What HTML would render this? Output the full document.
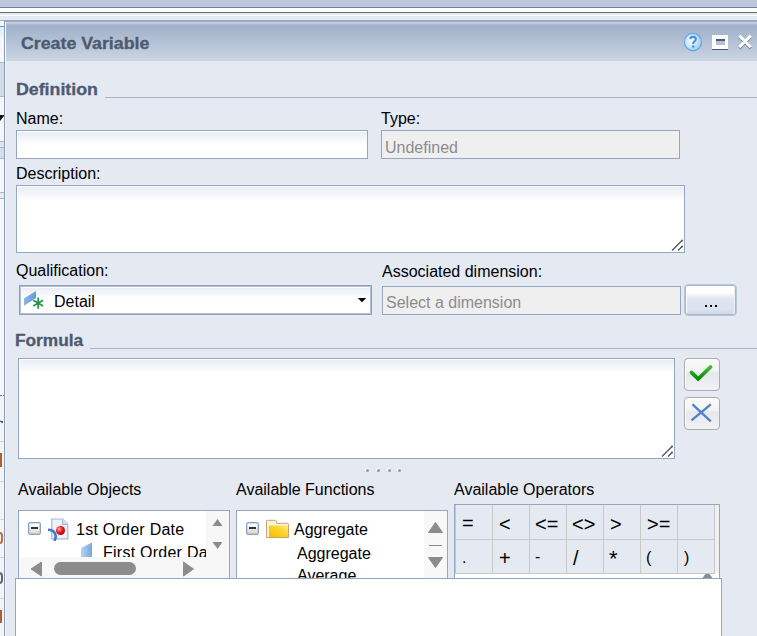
<!DOCTYPE html>
<html><head><meta charset="utf-8">
<style>
html,body{margin:0;padding:0;}
body{width:757px;height:636px;overflow:hidden;position:relative;background:#e4e9f2;font-family:"Liberation Sans",sans-serif;font-size:16px;color:#000;}
.a{position:absolute;}
.t{position:absolute;white-space:nowrap;line-height:1;}
/* background app */
#bgtop{left:0;top:0;width:757px;height:7px;background:#bdc7d9;}
#bgl1{left:0;top:7px;width:757px;height:1px;background:#6b82a6;}
#bgw{left:0;top:8px;width:757px;height:4px;background:#fff;}
#bgl2{left:0;top:12px;width:757px;height:1px;background:#6e6e6e;}
#bgs{left:0;top:13px;width:757px;height:7px;background:#e4e9f2;}
#bgs2{left:0;top:15px;width:757px;height:1px;background:#fbfcfe;}
/* dialog */
#dlg{left:4px;top:20px;width:760px;height:620px;background:#e4e9f2;border-left:1px solid #8a9cb8;border-top:2px solid #98a9c3;box-shadow:inset 1px 0 0 #f0f3f8;}
#hdr{left:6px;top:22px;width:760px;height:39px;background:linear-gradient(#d0d9e6 0px,#a6b5cc 3px,#a3b3cb 6px,#cbd5e4 39px);}
.title{font-weight:700;color:#4d5a6f;font-size:16px;transform-origin:0 0;transform:scaleX(1.11);-webkit-text-stroke:0.3px #4d5a6f;}
.sec{font-weight:700;color:#4d5a6f;font-size:16px;transform-origin:0 0;-webkit-text-stroke:0.3px #4d5a6f;}
.line{position:absolute;height:1px;background:#a3b4cc;}
.inp{position:absolute;box-sizing:border-box;border:1px solid #94a6c1;background:linear-gradient(#e8edf4 0px,#eef2f7 4px,#f7f9fb 10px,#fff 14px);box-shadow:inset 1px 1px 0 #fff;}
.dis{position:absolute;box-sizing:border-box;border:1px solid #94a6c1;background:#efefef;}
.gray{color:#8c8c8c;}
</style></head><body>
<div class="a" id="bgtop"></div>
<div class="a" id="bgl1"></div>
<div class="a" id="bgw"></div>
<div class="a" id="bgl2"></div>
<div class="a" id="bgs"></div>
<div class="a" id="bgs2"></div>

<!-- left strip -->
<div class="a" style="left:0;top:20px;width:4px;height:616px;background:#f5f6f9;"></div>
<div class="a" style="left:0;top:20px;width:4px;height:1px;background:#a9b8cd;"></div>
<div class="a" style="left:0;top:26px;width:4px;height:1px;background:#7590b4;"></div>
<div class="a" style="left:0;top:27px;width:4px;height:14px;background:linear-gradient(#d6f2fb,#f6fafd);"></div>
<div class="a" style="left:0;top:62px;width:4px;height:1px;background:#a9b5c5;"></div>
<div class="a" style="left:0;top:63px;width:4px;height:33px;background:#d3dbe6;"></div>
<div class="a" style="left:0;top:96px;width:4px;height:1px;background:#aab6c6;"></div>
<svg class="a" style="left:0;top:115px" width="4" height="7" viewBox="0 0 4 7"><path d="M0 0 H4 V1 L0 6 Z" fill="#111"/></svg>
<div class="a" style="left:0;top:141px;width:4px;height:1px;background:#a8b4c8;"></div>
<div class="a" style="left:0;top:142px;width:4px;height:5px;background:#e0e6ee;"></div>
<div class="a" style="left:0;top:147px;width:4px;height:1px;background:#a8b4c8;"></div>
<div class="a" style="left:0;top:148px;width:4px;height:10px;background:#d7dee8;"></div>
<div class="a" style="left:0;top:158px;width:4px;height:1px;background:#a8b4c8;"></div>
<div class="a" style="left:0;top:192px;width:4px;height:1px;background:#a8b4c8;"></div>
<div class="a" style="left:0;top:193px;width:4px;height:5px;background:#e8ecf2;"></div>
<div class="a" style="left:0;top:198px;width:4px;height:1px;background:#a8b4c8;"></div>
<div class="a" style="left:0;top:395px;width:4px;height:1px;background:repeating-linear-gradient(90deg,#777 0 2px,transparent 2px 3px);"></div>
<div class="a" style="left:0;top:396px;width:4px;height:240px;background:#f4f4f6;"></div>
<div class="a" style="left:0;top:420px;width:3px;height:3px;border-bottom:2px solid #2a4a7a;border-bottom-left-radius:3px;box-sizing:border-box;"></div>
<div class="a" style="left:0;top:441px;width:4px;height:1px;background:#d0d0d0;"></div>
<div class="a" style="left:0;top:453px;width:2px;height:14px;background:#b0602c;"></div>
<div class="a" style="left:0;top:481px;width:4px;height:1px;background:#d4d4d4;"></div>
<div class="a" style="left:0;top:519px;width:4px;height:1px;background:#d4d4d4;"></div>
<div class="a" style="left:-4px;top:532px;width:7px;height:12px;border:2px solid #c07038;border-radius:4px;box-sizing:border-box;"></div>
<div class="a" style="left:0;top:557px;width:4px;height:1px;background:#d4d4d4;"></div>
<div class="a" style="left:-4px;top:572px;width:7px;height:12px;border:2px solid #606878;border-left:none;border-radius:0 4px 4px 0;box-sizing:border-box;"></div>
<div class="a" style="left:0;top:598px;width:4px;height:1px;background:#d4d4d4;"></div>
<div class="a" style="left:0;top:610px;width:2px;height:13px;background:#b0602c;"></div>
<div class="a" id="dlg"></div>
<div class="a" id="hdr"></div>
<div class="a" style="left:5px;top:22px;width:1px;height:39px;background:#fff;"></div>
<div class="t title" style="left:21px;top:36px;">Create Variable</div>


<!-- header icons -->
<svg class="a" style="left:683px;top:32px" width="20" height="20" viewBox="0 0 20 20">
<defs><radialGradient id="hg" cx="0.4" cy="0.45" r="0.65"><stop offset="0" stop-color="#f2faff"/><stop offset="0.55" stop-color="#c4e6f8"/><stop offset="1" stop-color="#8fc3ee"/></radialGradient></defs>
<circle cx="10" cy="10" r="8.6" fill="url(#hg)" stroke="#6aa4e6" stroke-width="1.2"/>
<path d="M7.2 7 Q7.5 4.8 10.2 4.8 Q12.9 5 12.8 7.3 Q12.6 8.8 11 9.8 Q10.2 10.4 10.2 12" fill="none" stroke="#4d8ad8" stroke-width="2"/>
<rect x="9.1" y="13.4" width="2.2" height="2.2" fill="#4d8ad8"/>
</svg>
<div class="a" style="left:712px;top:35px;width:16px;height:14px;background:#fff;"></div>
<div class="a" style="left:716px;top:39px;width:9px;height:6px;background:#b4c1d6;border-top:2px solid #4d5a70;box-sizing:border-box;"></div>
<div class="a" style="left:712px;top:49px;width:16px;height:1px;background:#4d5a70;"></div>
<svg class="a" style="left:736px;top:33px" width="18" height="18" viewBox="0 0 18 18">
<path d="M3.2 3.8 L14.8 15.4 M14.8 3.8 L3.2 15.4" stroke="#56637a" stroke-width="3" stroke-opacity="0.7"/>
<path d="M3.2 2.6 L14.8 14.2 M14.8 2.6 L3.2 14.2" stroke="#fff" stroke-width="3"/>
</svg>

<!-- Definition -->
<div class="t sec" style="left:16px;top:82px;transform:scaleX(1.11);">Definition</div>
<div class="line" style="left:105px;top:97px;width:660px;"></div>

<div class="t" style="left:16px;top:111px;">Name:</div>
<div class="inp" style="left:16px;top:130px;width:352px;height:29px;"></div>
<div class="t" style="left:381px;top:111px;">Type:</div>
<div class="dis" style="left:381px;top:130px;width:299px;height:29px;"></div>
<div class="t gray" style="left:385px;top:140px;">Undefined</div>

<div class="t" style="left:16px;top:166px;">Description:</div>
<div class="inp" style="left:16px;top:185px;width:669px;height:68px;"></div>
<svg class="a" style="left:670px;top:239px" width="14" height="13" viewBox="0 0 14 13"><path d="M2 11.5 L12 1.5 M8 11.5 L12 7.5" stroke="#505050" stroke-width="1.2"/><circle cx="12" cy="1.5" r="1" fill="#505050"/><circle cx="12" cy="7.5" r="1" fill="#505050"/></svg>

<div class="t" style="left:16px;top:263px;">Qualification:</div>
<div class="a" style="left:19px;top:285px;width:353px;height:30px;box-sizing:border-box;border:1px solid #8fa1bd;background:linear-gradient(#e6ebf3 0px,#f6f8fb 8px,#fff 12px);box-shadow:inset 1px 1px 0 #aebdd2,inset -1px -1px 0 #aebdd2,inset 2px 2px 0 #fff;"></div>
<svg class="a" style="left:22px;top:289px" width="24" height="22" viewBox="0 0 24 22">
<defs><linearGradient id="pg" x1="0" y1="0" x2="1" y2="0.3"><stop offset="0" stop-color="#9cc0e6"/><stop offset="1" stop-color="#5e9ad6"/></linearGradient></defs>
<path d="M2 9.2 L14 2 L14 9 L2 16.8 Z" fill="url(#pg)"/>
<path d="M16.2 8.5 V19.8 M11.3 11.3 L21.1 17 M21.1 11.3 L11.3 17" stroke="#27924a" stroke-width="1.8"/>
</svg>
<div class="t" style="left:54px;top:294px;">Detail</div>
<svg class="a" style="left:357px;top:297px" width="10" height="6" viewBox="0 0 10 6"><path d="M0.8 1 H9.2 L5 5.2 Z" fill="#000"/></svg>

<div class="t" style="left:382px;top:264px;">Associated dimension:</div>
<div class="dis" style="left:382px;top:286px;width:299px;height:29px;"></div>
<div class="t gray" style="left:386px;top:295px;">Select a dimension</div>
<div class="a" style="left:684px;top:284px;width:53px;height:32px;box-sizing:border-box;border:1px solid #b9c6d9;border-radius:4px;background:linear-gradient(#e6ecf4 0px,#fdfeff 3px,#fff 7px,#e4e9f1 13px,#dce3ed 18px,#dce3ed 24px,#ccd6e3 30px);box-shadow:inset 0 0 0 1px #a6b6cd,inset 2px 2px 0 #fff,inset -2px -1px 0 #eef2f8;"></div>
<div class="a" style="left:705px;top:305px;width:2px;height:2px;background:#000;"></div>
<div class="a" style="left:710px;top:305px;width:2px;height:2px;background:#000;"></div>
<div class="a" style="left:715px;top:305px;width:2px;height:2px;background:#000;"></div>

<!-- Formula -->
<div class="t sec" style="left:15px;top:333px;transform:scaleX(1.08);">Formula</div>
<div class="line" style="left:90px;top:348px;width:670px;"></div>
<div class="inp" style="left:18px;top:358px;width:657px;height:101px;"></div>
<svg class="a" style="left:660px;top:445px" width="14" height="13" viewBox="0 0 14 13"><path d="M2 11.5 L12 1.5 M8 11.5 L12 7.5" stroke="#505050" stroke-width="1.2"/><circle cx="12" cy="1.5" r="1" fill="#505050"/><circle cx="12" cy="7.5" r="1" fill="#505050"/></svg>
<div class="a" style="left:684px;top:358px;width:36px;height:33px;box-sizing:border-box;border:1px solid #a9acb2;border-radius:4px;background:linear-gradient(#fafafa 0px,#f2f3f5 12px,#e6e8ec 14px,#eceef1 24px,#f3f4f6 32px);box-shadow:inset 1px 1px 0 #fff;"></div>
<svg class="a" style="left:686px;top:362px" width="30" height="24" viewBox="0 0 30 24">
<defs><linearGradient id="cg" x1="0" y1="0" x2="0" y2="1"><stop offset="0" stop-color="#40c030"/><stop offset="1" stop-color="#0a8a0a"/></linearGradient></defs>
<path d="M5.5 10.5 L12.2 16.8 L24.5 5" fill="none" stroke="url(#cg)" stroke-width="3.8" stroke-linecap="round" stroke-linejoin="miter"/>
</svg>
<div class="a" style="left:684px;top:397px;width:36px;height:33px;box-sizing:border-box;border:1px solid #a9acb2;border-radius:4px;background:linear-gradient(#fafafa 0px,#f2f3f5 12px,#e6e8ec 14px,#eceef1 24px,#f3f4f6 32px);box-shadow:inset 1px 1px 0 #fff;"></div>
<svg class="a" style="left:690px;top:403px" width="24" height="20" viewBox="0 0 24 20">
<path d="M2.5 1.3 L20.8 18.3 M20.8 1.3 L1.5 17.3" stroke="#4f82c8" stroke-width="2.3"/>
</svg>
<div class="a" style="left:366px;top:469px;width:3px;height:3px;border-radius:50%;background:#8e9bb0;box-shadow:-1px -1px 1px #fff;"></div>
<div class="a" style="left:377px;top:469px;width:3px;height:3px;border-radius:50%;background:#8e9bb0;box-shadow:-1px -1px 1px #fff;"></div>
<div class="a" style="left:388px;top:469px;width:3px;height:3px;border-radius:50%;background:#8e9bb0;box-shadow:-1px -1px 1px #fff;"></div>
<div class="a" style="left:398px;top:469px;width:3px;height:3px;border-radius:50%;background:#8e9bb0;box-shadow:-1px -1px 1px #fff;"></div>

<div class="t" style="left:18px;top:482px;">Available Objects</div>
<div class="t" style="left:236px;top:482px;">Available Functions</div>
<div class="t" style="left:454px;top:482px;">Available Operators</div>

<!-- objects tree -->
<div class="a" style="left:18px;top:510px;width:212px;height:80px;box-sizing:border-box;border:1px solid #94a6c1;background:#fff;overflow:hidden;">
  <div class="a" style="left:187px;top:0;width:23px;height:46px;background:#f7f7f7;"></div>
  <div class="a" style="left:0;top:46px;width:210px;height:40px;background:#f7f7f7;"></div>
</div>
<div class="a" style="left:28px;top:522px;width:13px;height:13px;box-sizing:border-box;border:1px solid #8aa2c2;border-radius:2px;background:linear-gradient(#ffffff 20%,#d8d2c6);box-shadow:inset 0 0 0 0.5px #a8bad2;"></div>
<div class="a" style="left:31px;top:527px;width:7px;height:2px;background:#333;"></div>
<svg class="a" style="left:48px;top:518px" width="22" height="23" viewBox="0 0 22 23">
<path d="M3.8 1 H14.5 L19.8 6.3 V20.8 H3.8 Z" fill="#eef3fa" stroke="#a3bad8" stroke-width="1.2"/>
<path d="M14.5 1 V6.3 H19.8" fill="#dde8f4" stroke="#a3bad8" stroke-width="1.2"/>
<path d="M0.8 11.8 Q6.5 12.2 7.6 17.3 Q8 20 6.8 22" fill="none" stroke="#3f78d6" stroke-width="2.6" stroke-linecap="round"/>
<defs><radialGradient id="rb" cx="0.35" cy="0.35" r="0.7"><stop offset="0" stop-color="#ffb0b0"/><stop offset="0.5" stop-color="#ee2020"/><stop offset="1" stop-color="#b00000"/></radialGradient></defs>
<circle cx="12.5" cy="12.5" r="4.5" fill="url(#rb)"/>
</svg>
<div class="t" style="left:76px;top:522px;letter-spacing:0.25px;">1st Order Date</div>
<div class="a" style="left:18px;top:510px;width:188px;height:47px;overflow:hidden;">
  <svg class="a" style="left:62px;top:32px" width="14" height="16" viewBox="0 0 14 16"><defs><linearGradient id="pb2" x1="0" y1="0" x2="1" y2="0"><stop offset="0" stop-color="#b8d4f0"/><stop offset="1" stop-color="#78a8dc"/></linearGradient></defs><path d="M1 6 L12 0.5 V16 H1 Z" fill="url(#pb2)"/></svg>
  <div class="t" style="left:85px;top:35px;letter-spacing:0.25px;">First Order Date</div>
</div>
<svg class="a" style="left:211px;top:518px" width="13" height="9" viewBox="0 0 13 9"><path d="M1.5 8 L6.5 1 L11.5 8 Z" fill="#8c8c8c"/></svg>
<svg class="a" style="left:211px;top:541px" width="13" height="9" viewBox="0 0 13 9"><path d="M1.5 1 L6.5 8 L11.5 1 Z" fill="#8c8c8c"/></svg>
<svg class="a" style="left:30px;top:561px" width="13" height="16" viewBox="0 0 13 16"><path d="M1 8 L11.5 1 V15 Z" fill="#8c8c8c" stroke="#8c8c8c" stroke-width="1" stroke-linejoin="round"/></svg>
<div class="a" style="left:54px;top:562px;width:82px;height:13px;border-radius:7px;background:#8c8c8c;"></div>
<svg class="a" style="left:182px;top:561px" width="13" height="16" viewBox="0 0 13 16"><path d="M11.5 8 L1.5 1 V15 Z" fill="#8c8c8c" stroke="#8c8c8c" stroke-width="1" stroke-linejoin="round"/></svg>

<!-- functions tree -->
<div class="a" style="left:236px;top:510px;width:212px;height:80px;box-sizing:border-box;border:1px solid #94a6c1;background:#fff;overflow:hidden;">
  <div class="a" style="left:187px;top:0;width:23px;height:80px;background:#f8f8f8;"></div>
</div>
<div class="a" style="left:246px;top:522px;width:13px;height:13px;box-sizing:border-box;border:1px solid #8aa2c2;border-radius:2px;background:linear-gradient(#ffffff 20%,#d8d2c6);box-shadow:inset 0 0 0 0.5px #a8bad2;"></div>
<div class="a" style="left:249px;top:527px;width:7px;height:2px;background:#333;"></div>
<svg class="a" style="left:265px;top:518px" width="25" height="21" viewBox="0 0 25 21">
<defs><linearGradient id="fg" x1="0" y1="1" x2="1" y2="0"><stop offset="0" stop-color="#f2bd00"/><stop offset="0.6" stop-color="#ffd62a"/><stop offset="1" stop-color="#ffec90"/></linearGradient></defs>
<path d="M1.5 19.5 V3.2 Q1.5 2.3 2.5 2.3 H10.3 Q11.3 2.3 11.5 3.5 L11.8 5.3 H22.5 Q23.5 5.3 23.5 6.3 V19.5 Z" fill="#fbf3dc" stroke="#c9a468" stroke-width="1"/>
<rect x="4" y="7.5" width="19" height="11.5" fill="url(#fg)"/>
</svg>
<div class="a" style="left:236px;top:510px;width:188px;height:68px;overflow:hidden;">
  <div class="t" style="left:58px;top:12px;">Aggregate</div>
  <div class="t" style="left:61px;top:36px;">Aggregate</div>
  <div class="t" style="left:61px;top:58px;">Average</div>
</div>
<svg class="a" style="left:427px;top:521px" width="17" height="13" viewBox="0 0 17 13"><path d="M1.5 11.5 L8.5 1.5 L15.5 11.5 Z" fill="#8c8c8c" stroke="#8c8c8c" stroke-width="1" stroke-linejoin="round"/></svg>
<div class="a" style="left:429px;top:545px;width:13px;height:1px;background:#8c8c8c;"></div>
<svg class="a" style="left:427px;top:556px" width="17" height="13" viewBox="0 0 17 13"><path d="M1.5 1.5 L8.5 11.5 L15.5 1.5 Z" fill="#8c8c8c" stroke="#8c8c8c" stroke-width="1" stroke-linejoin="round"/></svg>

<!-- operators -->
<div class="a" style="left:454px;top:504px;width:266px;height:80px;box-sizing:border-box;border:1px solid #94a6c1;border-bottom:none;background:#fff;"></div>
<div class="a" style="left:455px;top:505px;width:259px;height:68px;background:#e4e9f2;"></div>
<div class="a" style="left:714px;top:505px;width:5px;height:68px;background:#f0f0f0;"></div>
<div class="a" style="left:455px;top:505px;width:1px;height:68px;background:#c8c8c8;"></div>
<div class="a" style="left:492px;top:505px;width:1px;height:68px;background:#c8c8c8;"></div>
<div class="a" style="left:529px;top:505px;width:1px;height:68px;background:#c8c8c8;"></div>
<div class="a" style="left:566px;top:505px;width:1px;height:68px;background:#c8c8c8;"></div>
<div class="a" style="left:603px;top:505px;width:1px;height:68px;background:#c8c8c8;"></div>
<div class="a" style="left:640px;top:505px;width:1px;height:68px;background:#c8c8c8;"></div>
<div class="a" style="left:677px;top:505px;width:1px;height:68px;background:#c8c8c8;"></div>
<div class="a" style="left:714px;top:505px;width:1px;height:68px;background:#c8c8c8;"></div>
<div class="a" style="left:455px;top:539px;width:260px;height:1px;background:#c8c8c8;"></div>
<div class="a" style="left:455px;top:573px;width:260px;height:1px;background:#c8c8c8;"></div>
<svg class="a" style="left:702px;top:573px" width="11" height="5" viewBox="0 0 11 5"><path d="M0.5 5 L3.5 1 H7.5 L10.5 5 Z" fill="#8c8c8c"/></svg>
<div class="t" style="left:462px;top:513px;font-size:20px;">=</div>
<div class="t" style="left:499px;top:514px;font-size:20px;">&lt;</div>
<div class="t" style="left:535px;top:514px;font-size:20px;">&lt;=</div>
<div class="t" style="left:572px;top:514px;font-size:20px;">&lt;&gt;</div>
<div class="t" style="left:610px;top:514px;font-size:20px;">&gt;</div>
<div class="t" style="left:647px;top:514px;font-size:20px;">&gt;=</div>
<div class="t" style="left:462px;top:550px;font-size:16px;">.</div>
<div class="t" style="left:499px;top:548px;font-size:20px;">+</div>
<div class="t" style="left:535px;top:549px;font-size:16px;">-</div>
<div class="t" style="left:573px;top:548px;font-size:20px;">/</div>
<div class="t" style="left:609px;top:548px;font-size:22px;">*</div>
<div class="t" style="left:646px;top:550px;font-size:16px;">(</div>
<div class="t" style="left:684px;top:550px;font-size:16px;">)</div>


<div class="a" style="left:15px;top:578px;width:707px;height:70px;box-sizing:border-box;border:1px solid #94a6c1;background:#fff;"></div>
</body></html>
